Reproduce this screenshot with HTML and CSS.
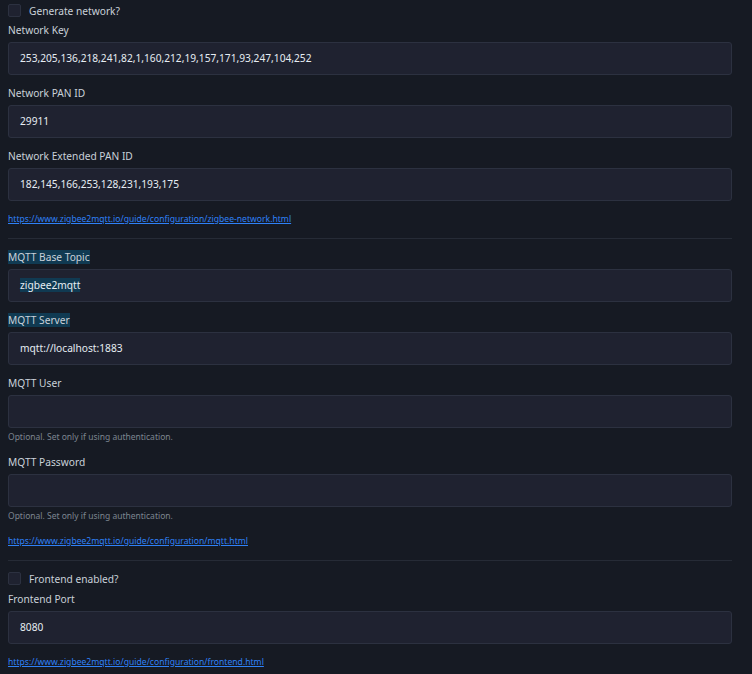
FILE: index.html
```html
<!DOCTYPE html>
<html lang="en">
<head>
  <meta charset="utf-8">
  <title>Zigbee2MQTT configuration</title>
  <link rel="stylesheet" href="styles.css">
</head>
<body>
  <form class="config">
    <label class="check"><span class="box"></span>Generate network?</label>
    <div class="field">
      <label class="lbl">Network Key</label>
      <div class="input">253,205,136,218,241,82,1,160,212,19,157,171,93,247,104,252</div>
    </div>
    <div class="field">
      <label class="lbl">Network PAN ID</label>
      <div class="input">29911</div>
    </div>
    <div class="field">
      <label class="lbl">Network Extended PAN ID</label>
      <div class="input">182,145,166,253,128,231,193,175</div>
    </div>
    <a class="doc" href="#">https://www.zigbee2mqtt.io/guide/configuration/zigbee-network.html</a>
    <hr class="sep">

    <div class="field">
      <label class="lbl"><span class="sel">MQTT Base Topic</span></label>
      <div class="input"><span class="sel">zigbee2mqtt</span></div>
    </div>
    <div class="field">
      <label class="lbl"><span class="sel">MQTT Server</span></label>
      <div class="input">mqtt://localhost:1883</div>
    </div>
    <div class="field">
      <label class="lbl">MQTT User</label>
      <div class="input"></div>
      <div class="help">Optional. Set only if using authentication.</div>
    </div>
    <div class="field">
      <label class="lbl">MQTT Password</label>
      <div class="input"></div>
      <div class="help">Optional. Set only if using authentication.</div>
    </div>
    <a class="doc" href="#">https://www.zigbee2mqtt.io/guide/configuration/mqtt.html</a>
    <hr class="sep">

    <label class="check"><span class="box"></span>Frontend enabled?</label>
    <div class="field">
      <label class="lbl">Frontend Port</label>
      <div class="input">8080</div>
    </div>
    <a class="doc" href="#">https://www.zigbee2mqtt.io/guide/configuration/frontend.html</a>
  </form>
</body>
</html>
```

FILE: styles.css
```css
body {
  margin: 0;
  background: #161a23;
  color: #c9d1d9;
  font-family: "Noto Sans", "Open Sans", sans-serif;
  font-size: 10.2px;
}
.config {
  padding: 1px 20px 0 8px;
}
.check {
  display: flex;
  align-items: center;
  height: 19px;
  color: #c9d1d9;
}
.box {
  width: 11px;
  height: 11px;
  border: 1px solid #2c3140;
  border-radius: 2px;
  background: #1f2230;
  margin-right: 8px;
}
.field {
  margin-bottom: 9px;
}
.lbl {
  display: block;
  line-height: 18px;
  margin: 1px 0 3px;
}
.input {
  height: 31px;
  line-height: 31px;
  border: 1px solid #2c3140;
  border-radius: 3px;
  background: #1f2230;
  color: #e6edf3;
  padding: 0 11px;
}
.help {
  font-size: 8.5px;
  color: #7d8590;
  line-height: 14px;
  margin-top: 2px;
}
.sel {
  background: #103a52;
}
.doc {
  display: block;
  font-size: 8.6px;
  line-height: 14px;
  color: #2f81f7;
  margin-top: 11px;
}
.sep {
  border: 0;
  border-top: 1px solid #262b36;
  margin: 12px 0 8px;
}
.sep + .field .lbl {
  margin-top: 9px;
}
.sep + .check + .field .lbl {
  margin-top: 2px;
}
```
